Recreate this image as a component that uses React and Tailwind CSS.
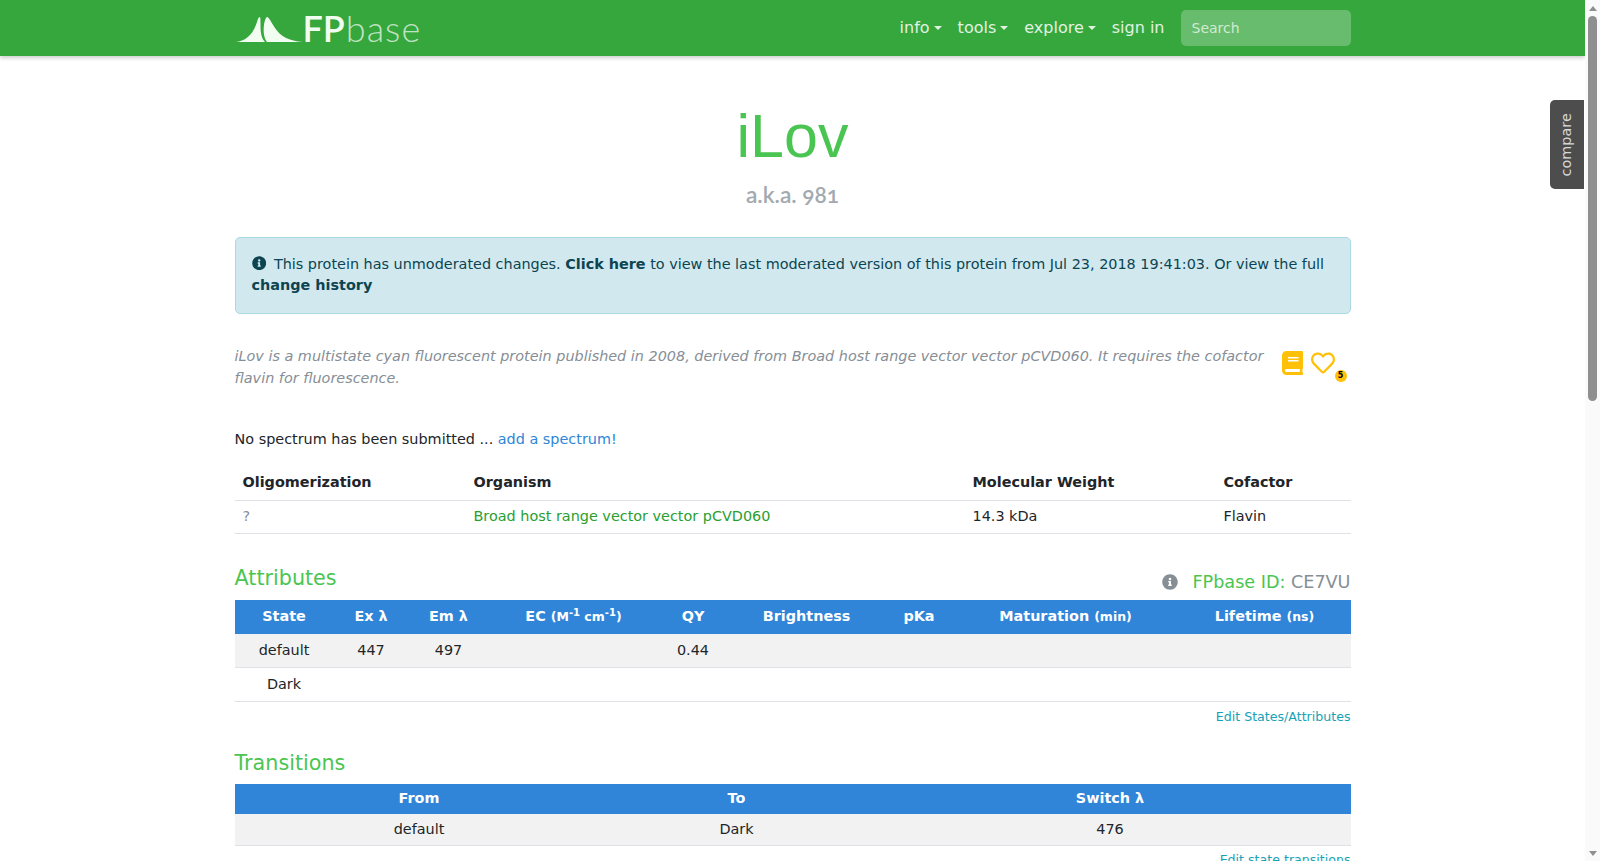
import React from "react";
import { FaBook, FaInfoCircle, FaRegHeart } from "react-icons/fa";

const attrs = [
  { state: "default", ex: "447", em: "497", qy: "0.44", bg: "bg-[#f2f2f2]" },
  { state: "Dark", ex: "", em: "", qy: "", bg: "bg-white" },
];

const Caret = () => (
  <span className="inline-block ml-1 align-[3px] border-x-[4.8px] border-t-[4.8px] border-x-transparent border-t-white/85"></span>
);

const Logo = () => (
  <div className="flex items-center -ml-[2px]">
    <svg viewBox="0 0 70 28" className="w-[70px] h-[28px] mt-[2px]" fill="#f1fdf0">
      <path d="M3 27C12 26 20 20 24 7C25 3 26 2 27 2C28 5 27 12 28 18C28.500 22 30 25 32 27Z" />
      <path d="M34 27C31 23 30 17 31 10C31.500 6 33 2 34 2C36 2 38 7 42 13C47 21 56 26 70 27Z" />
    </svg>
    <span className="text-[36px] leading-none font-['Lato'] text-[#f1fdf0] font-semibold">FP</span>
    <span className="text-[36px] leading-none font-['Lato'] text-white/70 font-light tracking-[1px] ml-[1px]">base</span>
  </div>
);

export default function App() {
  return (
    <div className="h-screen overflow-hidden flex bg-white text-[#212529] font-['DejaVu_Sans',sans-serif] text-[14.4px] leading-[1.5]">
      <div className="relative flex-1 overflow-hidden">
        <nav className="h-14 bg-[#35a73c] shadow-[0_2px_4px_rgba(0,0,0,0.2)] relative z-10 text-base">
          <div className="w-[1116px] mx-auto h-full flex items-center justify-between">
            <Logo />
            <div className="flex items-center text-white/85 gap-4">
              <span>info<Caret /></span>
              <span>tools<Caret /></span>
              <span>explore<Caret /></span>
              <span>sign in</span>
              <div className="w-[170px] h-[36px] rounded-[5px] bg-white/25 flex items-center px-[11px] text-sm text-white/70">Search</div>
            </div>
          </div>
        </nav>

        <div className="absolute right-[1px] top-[100px] w-[34px] h-[89px] bg-[#4d4d4d] rounded-l-[5px] flex items-center justify-center">
          <span className="-rotate-90 text-[#d8d8d8] text-[14.4px] whitespace-nowrap">compare</span>
        </div>

        <main className="w-[1116px] mx-auto">
          <div className="text-center pt-[44px]">
            <h1 className="text-[61px] leading-[72px] text-[#4bc552] font-['Liberation_Sans',sans-serif]">iLov</h1>
            <h4 className="text-[22.7px] leading-[1.2] mt-[9px] text-[#a2a9af] font-['Lato',sans-serif] font-semibold [font-variant-numeric:oldstyle-nums]">a.k.a. 981</h4>
          </div>

          <div className="mt-[29px] h-[77px] bg-[#d1e9ee] border border-[#a9dae3] rounded-[5px] px-4 py-4 text-[#0c4452] leading-[21px]">
            <FaInfoCircle className="inline-block w-[14.4px] h-[14.4px] mr-[8px] align-[-1px]" />
            This protein has unmoderated changes. <b>Click here</b> to view the last moderated version of this protein from Jul 23, 2018 19:41:03. Or view the full <b>change history</b>
          </div>

          <div className="mt-[32px] flex items-start justify-between">
            <p className="w-[1040px] leading-[21.6px] italic text-[#868e96]">
              iLov is a multistate cyan fluorescent protein published in 2008, derived from Broad host range vector vector pCVD060. It requires the cofactor flavin for fluorescence.
            </p>
            <div className="relative flex items-center gap-[8px] mt-[5px] mr-[16px]">
              <FaBook className="w-[21px] h-[24px] text-[#ffc107]" />
              <FaRegHeart className="w-[24px] h-[24px] text-[#ffc107]" />
              <span className="absolute -right-[12px] -bottom-[7px] w-3 h-3 rounded-full bg-[#ffc107] text-black text-[8px] font-bold leading-3 text-center">5</span>
            </div>
          </div>

          <p className="mt-[39px] leading-[22px]">
            No spectrum has been submitted ... <span className="text-[#2e86d9]">add a spectrum!</span>
          </p>

          <table className="mt-[14px] w-full border-collapse table-fixed">
            <thead>
              <tr className="h-[36px] border-b border-[#dee2e6] text-left">
                <th className="w-[231px] px-2 pt-[2px]">Oligomerization</th>
                <th className="w-[499px] px-2 pt-[2px]">Organism</th>
                <th className="w-[251px] px-2 pt-[2px]">Molecular Weight</th>
                <th className="px-2 pt-[2px]">Cofactor</th>
              </tr>
            </thead>
            <tbody>
              <tr className="h-[33px] border-b border-[#dee2e6]">
                <td className="px-2 text-[#868e96]">?</td>
                <td className="px-2 text-[#28a02f]">Broad host range vector vector pCVD060</td>
                <td className="px-2">14.3 kDa</td>
                <td className="px-2">Flavin</td>
              </tr>
            </tbody>
          </table>

          <div className="mt-[30px] flex items-end justify-between">
            <h3 className="text-[20.7px] leading-[28px] text-[#4bc552]">Attributes</h3>
            <div className="flex items-center text-[17.6px] leading-[26px] -mb-[3px]">
              <FaInfoCircle className="w-4 h-4 mr-[14px] text-[#868e96]" />
              <span className="text-[#4bc552]">FPbase ID:&nbsp;</span>
              <span className="text-[#868e96]">CE7VU</span>
            </div>
          </div>

          <table className="mt-[8px] w-full text-center border-collapse table-fixed">
            <thead>
              <tr className="h-[34px] bg-[#3085d8] text-white font-bold">
                <th className="w-[99px]">State</th>
                <th className="w-[75px]">Ex λ</th>
                <th className="w-[80px]">Em λ</th>
                <th className="w-[170px]">EC <small className="text-[12.5px]">(M<sup className="text-[10px]">-1</sup> cm<sup className="text-[10px]">-1</sup>)</small></th>
                <th className="w-[69px]">QY</th>
                <th className="w-[158px]">Brightness</th>
                <th className="w-[67px]">pKa</th>
                <th className="w-[226px]">Maturation <small className="text-[12.5px]">(min)</small></th>
                <th>Lifetime <small className="text-[12.5px]">(ns)</small></th>
              </tr>
            </thead>
            <tbody>
              {attrs.map((row) => (
                <tr key={row.state} className={`h-[34px] border-b border-[#dee2e6] ${row.bg}`}>
                  <td>{row.state}</td>
                  <td>{row.ex}</td>
                  <td>{row.em}</td>
                  <td></td>
                  <td>{row.qy}</td>
                  <td></td>
                  <td></td>
                  <td></td>
                  <td></td>
                </tr>
              ))}
            </tbody>
          </table>
          <div className="text-right text-[12.6px] leading-[20px] mt-[5px] text-[#17a2b8]">Edit States/Attributes</div>

          <h3 className="mt-[22px] text-[20.7px] leading-[28px] text-[#4bc552]">Transitions</h3>
          <table className="mt-[7px] w-full text-center border-collapse table-fixed">
            <thead>
              <tr className="h-[30px] bg-[#3085d8] text-white font-bold">
                <th className="w-[369px] pb-[2px]">From</th>
                <th className="w-[266px] pb-[2px]">To</th>
                <th className="pb-[2px]">Switch λ</th>
              </tr>
            </thead>
            <tbody>
              <tr className="h-[31px] border-b border-[#dee2e6] bg-[#f2f2f2]">
                <td>default</td>
                <td>Dark</td>
                <td>476</td>
              </tr>
            </tbody>
          </table>
          <div className="text-right text-[12.6px] leading-[20px] mt-[4px] text-[#17a2b8]">Edit state transitions</div>
        </main>
      </div>

      {/* scrollbar */}
      <div className="w-[15px] shrink-0 bg-[#fafafa] flex flex-col items-center relative">
        <div className="mt-[6px] w-0 h-0 border-x-[4.5px] border-b-[5px] border-x-transparent border-b-[#8f8f8f]"></div>
        <div className="mt-[5px] w-[9px] h-[385px] rounded-full bg-[#8f8f8f]"></div>
        <div className="absolute bottom-[5px] w-0 h-0 border-x-[4.5px] border-t-[5px] border-x-transparent border-t-[#8f8f8f]"></div>
      </div>
    </div>
  );
}
